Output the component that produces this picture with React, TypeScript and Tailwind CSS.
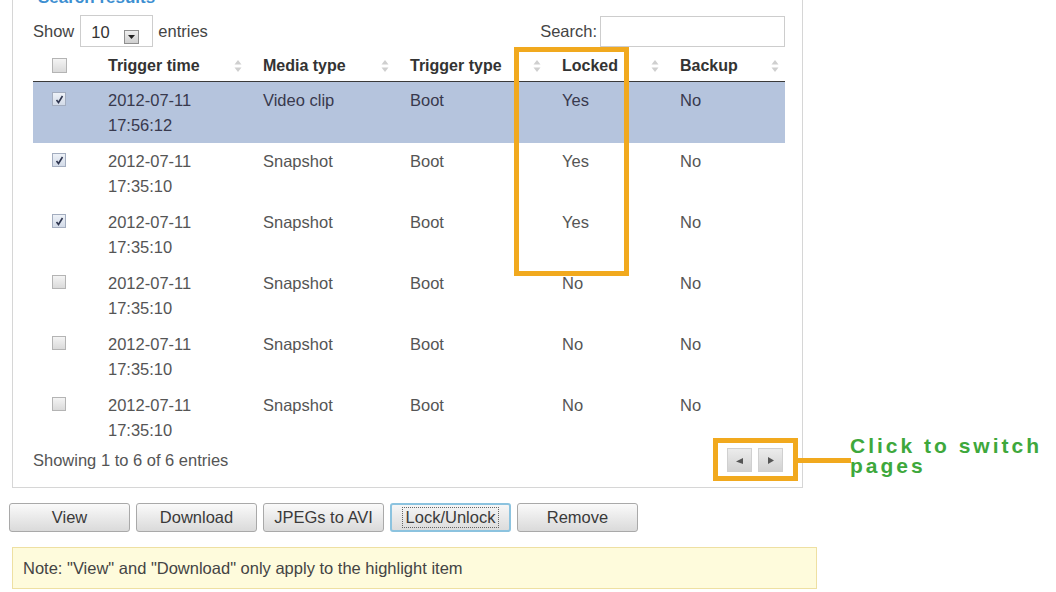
import React from 'react';

type Row = {
  date: string;
  time: string;
  media: string;
  trigger: string;
  locked: string;
  backup: string;
  checked: boolean;
  active?: boolean;
};

const rows: Row[] = [
  { date: '2012-07-11', time: '17:56:12', media: 'Video clip', trigger: 'Boot', locked: 'Yes', backup: 'No', checked: true, active: true },
  { date: '2012-07-11', time: '17:35:10', media: 'Snapshot', trigger: 'Boot', locked: 'Yes', backup: 'No', checked: true },
  { date: '2012-07-11', time: '17:35:10', media: 'Snapshot', trigger: 'Boot', locked: 'Yes', backup: 'No', checked: true },
  { date: '2012-07-11', time: '17:35:10', media: 'Snapshot', trigger: 'Boot', locked: 'No', backup: 'No', checked: false },
  { date: '2012-07-11', time: '17:35:10', media: 'Snapshot', trigger: 'Boot', locked: 'No', backup: 'No', checked: false },
  { date: '2012-07-11', time: '17:35:10', media: 'Snapshot', trigger: 'Boot', locked: 'No', backup: 'No', checked: false },
];

const cols = 'grid grid-cols-[60px_155px_147px_152px_118px_120px]';

const SortIcon = () => (
  <svg width="8" height="14" viewBox="0 0 8 14" className="shrink-0">
    <path d="M4 1 L7.5 5.5 H0.5 Z" fill="#cfcfcf" />
    <path d="M4 13 L7.5 8.5 H0.5 Z" fill="#cfcfcf" />
  </svg>
);

const Checkbox = ({ checked, size = 14 }: { checked: boolean; size?: number }) => (
  <span
    className={
      checked
        ? 'flex items-center justify-center border border-[#a3adbf] bg-linear-to-b from-[#eef2f8] to-[#d3dbe8]'
        : 'flex items-center justify-center border border-[#b4b4b4] bg-linear-to-b from-[#f4f4f4] to-[#dadada]'
    }
    style={{ width: size, height: size }}
  >
    {checked && (
      <svg width="9" height="9" viewBox="0 0 9 9">
        <path d="M1.5 5 L3.5 7.5 L7.5 1" fill="none" stroke="#2f3650" strokeWidth="1.6" />
      </svg>
    )}
  </span>
);

const HeadCell = ({ label }: { label: string }) => (
  <div className="flex items-center justify-between pl-[15px] pr-[6px] whitespace-nowrap">
    <span>{label}</span>
    <SortIcon />
  </div>
);

const Button = ({ children, focused }: { children: React.ReactNode; focused?: boolean }) => (
  <button
    className={
      focused
        ? 'w-[121px] h-[29px] rounded-[3px] border-2 border-[#8cc3df] bg-linear-to-b from-[#f6f6f6] to-[#dcdcdc] text-[16.5px] text-[#3a3a3a] flex items-center justify-center'
        : 'w-[121px] h-[29px] rounded-[3px] border border-[#a9a9a9] bg-linear-to-b from-[#fafafa] to-[#dadada] text-[16.5px] text-[#3a3a3a] flex items-center justify-center'
    }
  >
    {focused ? <span className="border border-dotted border-[#666] px-[3px] leading-[19px]">{children}</span> : children}
  </button>
);

const PagerButton = ({ dir }: { dir: 'prev' | 'next' }) => (
  <span className="w-[25px] h-[24px] flex items-center justify-center bg-linear-to-b from-[#ececec] to-[#d2d2d2] border border-[#d0d0d0]">
    <svg width="9" height="9" viewBox="0 0 9 9">
      {dir === 'prev' ? <path d="M1 5.5 L8 2 L8 8 Z" fill="#555" /> : <path d="M2 1 L8 4.5 L2 8 Z" fill="#555" />}
    </svg>
  </span>
);

export default function App() {
  return (
    <div className="relative w-[1056px] h-[592px] overflow-hidden bg-white font-['Liberation_Sans',Arial,sans-serif] text-[16.5px] text-[#555]">
      {/* Results panel */}
      <div className="-mt-[20px] ml-[12px] w-[791px] border border-[#d6d6d6] pt-[7px] pl-[20px] pr-[17px] pb-[15px]">
        <h2 className="h-[20px] leading-[20px] pl-[5px] text-[17px] font-bold text-[#3d8fd1]">Search results</h2>

        {/* Length + search controls */}
        <div className="mt-[7px] h-[32px] flex items-center">
          <span className="text-[#444]">Show</span>
          <div className="ml-[6px] w-[73px] h-[32px] border border-[#cdcdcd] flex items-center pl-[10px] pt-[3px]">
            <span className="text-[#333]">10</span>
            <span className="ml-auto mr-[13px] mt-[8px] w-[15px] h-[14px] border border-[#8f8f8f] bg-linear-to-b from-[#efefef] to-[#cfcfcf] flex items-center justify-center">
              <svg width="7" height="4" viewBox="0 0 7 4">
                <path d="M0 0 H7 L3.5 4 Z" fill="#222" />
              </svg>
            </span>
          </div>
          <span className="ml-[5px] text-[#444]">entries</span>
          <span className="ml-auto text-[#444]">Search:</span>
          <input className="ml-[3px] w-[185px] h-[31px] border border-[#cdcdcd] outline-none" />
        </div>

        {/* Table */}
        <div className="mt-[3px]">
          <div className={`${cols} h-[32px] items-center border-b border-[#3a3a3a] text-[16px] font-bold text-[#333]`}>
            <div className="pl-[19px]">
              <Checkbox checked={false} size={15} />
            </div>
            <HeadCell label="Trigger time" />
            <HeadCell label="Media type" />
            <HeadCell label="Trigger type" />
            <HeadCell label="Locked" />
            <HeadCell label="Backup" />
          </div>

          {rows.map((r, i) => (
            <div
              key={i}
              className={`${cols} h-[61px] leading-[25px] ${r.active ? 'bg-[#b5c4dd] text-[#38394d]' : ''}`}
            >
              <div className="pl-[19px] pt-[10px]">
                <Checkbox checked={r.checked} />
              </div>
              <div className="pl-[15px] pt-[6px]">
                <div>{r.date}</div>
                <div>{r.time}</div>
              </div>
              <div className="pl-[15px] pt-[6px]">{r.media}</div>
              <div className="pl-[15px] pt-[6px]">{r.trigger}</div>
              <div className="pl-[15px] pt-[6px]">{r.locked}</div>
              <div className="pl-[15px] pt-[6px]">{r.backup}</div>
            </div>
          ))}

          <div className="h-[24px] flex items-center">
            <span>Showing 1 to 6 of 6 entries</span>
            <div className="ml-auto mr-[2px] flex gap-[6px]">
              <PagerButton dir="prev" />
              <PagerButton dir="next" />
            </div>
          </div>
        </div>
      </div>

      {/* Action buttons */}
      <div className="mt-[15px] ml-[9px] flex gap-[6px]">
        <Button>View</Button>
        <Button>Download</Button>
        <Button>JPEGs to AVI</Button>
        <Button focused>Lock/Unlock</Button>
        <Button>Remove</Button>
      </div>

      {/* Note bar */}
      <div className="mt-[15px] ml-[12px] w-[805px] h-[42px] border border-[#eee0a2] bg-[#fefbdc] flex items-center pl-[10px] text-[#444]">
        Note: "View" and "Download" only apply to the highlight item
      </div>

      {/* Callouts */}
      <div className="absolute left-[514px] top-[47px] w-[115px] h-[229px] border-[5px] border-[#f1a91e]" />
      <div className="absolute left-[713px] top-[438px] w-[85px] h-[43px] border-[5px] border-[#f1a91e]" />
      <div className="absolute left-[797px] top-[458px] w-[54px] h-[5px] bg-[#f1a91e]" />
      <div className="absolute left-[850px] top-[436px] text-[21px] leading-[20px] font-bold tracking-[3px] text-[#3ea83c] whitespace-nowrap">
        <div>Click to switch</div>
        <div>pages</div>
      </div>
    </div>
  );
}
